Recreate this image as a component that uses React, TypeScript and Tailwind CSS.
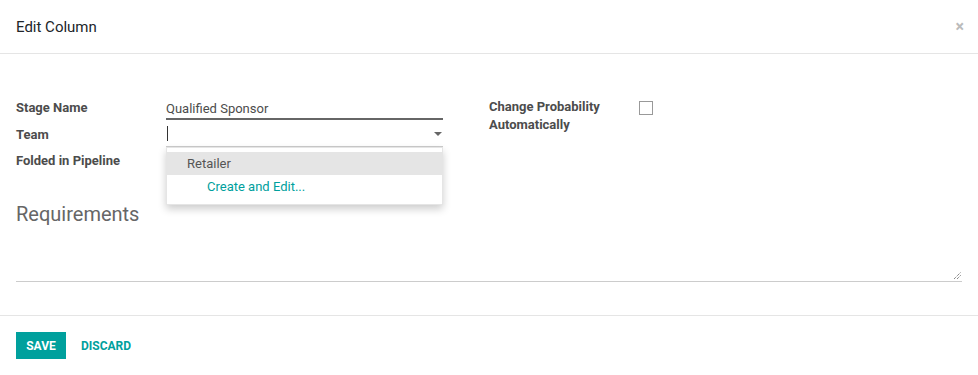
import React from "react";

export default function App() {
  return (
    <div className="w-[978px] h-[375px] bg-white text-[13px] text-[#4c4c4c] overflow-hidden" style={{ fontFamily: "Roboto, 'Liberation Sans', sans-serif" }}>
      {/* Header */}
      <div className="h-[54px] border-b border-[#e5e5e5] flex items-center justify-between pl-4 pr-[14px]">
        <div className="text-[15px] text-[#212529] pt-[1px]">Edit Column</div>
        <div className="text-[16px] text-[#bbb] leading-none font-bold">×</div>
      </div>

      {/* Body */}
      <div className="px-4 pt-[42px] h-[262px] border-b border-[#e5e5e5]">
        <div className="flex">
          <div className="w-[427px] flex flex-col">
            <div className="flex h-[24px]">
              <div className="w-[150px] font-bold text-[13px] text-[#4c4c4c] pt-[2px]">Stage Name</div>
              <div className="flex-1 border-b-2 border-[#666] text-[13px] text-[#4c4c4c] pt-[3px]">Qualified Sponsor</div>
            </div>
            <div className="flex h-[27px]">
              <div className="w-[150px] font-bold text-[13px] text-[#4c4c4c] pt-[5px]">Team</div>
              <div className="flex-1 relative border-b border-[#ccc] flex items-center justify-between">
                <div className="w-[1px] h-[15px] bg-[#333] ml-[1px] mt-[1px]" />
                <div className="w-0 h-0 border-l-[4px] border-r-[4px] border-t-[4px] border-l-transparent border-r-transparent border-t-[#666] mr-[1px] mt-[1px]" />
                <div className="absolute left-0 right-0 top-[27px] bg-white border border-[#e5e5e5] shadow-[0_4px_8px_rgba(0,0,0,0.2)] pt-[4px] pb-[6px] z-10">
                  <div className="h-[23px] bg-[#e5e5e5] flex items-center pl-[20px] text-[13px] text-[#555]">Retailer</div>
                  <div className="h-[23px] flex items-center pl-[40px] text-[13px] text-[#00a09d]">Create and Edit...</div>
                </div>
              </div>
            </div>
            <div className="flex h-[26px]">
              <div className="w-[150px] font-bold text-[13px] text-[#4c4c4c] pt-[4px]">Folded in Pipeline</div>
            </div>
          </div>
          <div className="ml-[46px] flex">
            <div className="w-[150px] font-bold text-[13px] text-[#4c4c4c] leading-[18px] pt-[2px]">
              Change Probability<br />Automatically
            </div>
            <div className="w-[14px] h-[14px] border border-[#999] mt-[5px] bg-white" />
          </div>
        </div>

        <div className="mt-[29px] text-[20px] text-[#666] leading-[24px]">Requirements</div>
        <div className="mt-[14px] h-[42px] border-b border-[#ccc] relative">
          <svg className="absolute right-[1px] bottom-[2px]" width="8" height="8" viewBox="0 0 8 8">
            <line x1="1" y1="8" x2="8" y2="1" stroke="#555" strokeWidth="1" strokeDasharray="1 1" />
            <line x1="4" y1="8" x2="8" y2="4" stroke="#555" strokeWidth="1" strokeDasharray="1 1" />
          </svg>
        </div>
      </div>

      {/* Footer */}
      <div className="px-4 pt-[16px] flex items-center gap-[15px]">
        <button className="h-[27px] w-[50px] bg-[#00a09d] text-white font-bold text-[12px] flex items-center justify-center">SAVE</button>
        <button className="text-[#00a09d] font-bold text-[12px]">DISCARD</button>
      </div>
    </div>
  );
}
